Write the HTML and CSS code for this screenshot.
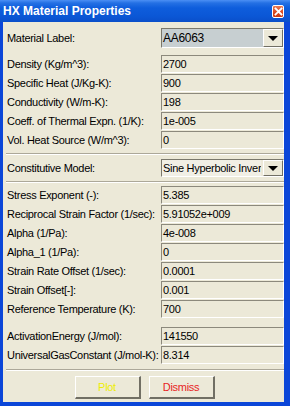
FILE: index.html
```html
<!DOCTYPE html>
<html lang="en">
<head>
    <meta charset="UTF-8">
    <title>HX Material Properties</title>
    <link rel="stylesheet" href="styles.css">
</head>
<body>
    <div class="window">
        <div class="titlebar">
            <span class="title">HX Material Properties</span>
            <span class="close">
                <svg width="9" height="9" viewBox="0 0 9 9">
                    <path d="M1.5 1.5 L7.5 7.5 M7.5 1.5 L1.5 7.5" stroke="#fff" stroke-width="1.8" stroke-linecap="square"/>
                </svg>
            </span>
        </div>
        <div class="frame">
            <div class="row row-top">
                <label>Material Label:</label>
                <div class="combo combo-grey">
                    <span class="combo-text">AA6063</span>
                    <span class="combo-btn"><span class="arrow"></span></span>
                </div>
            </div>

            <div class="group">
                <div class="row"><label>Density (Kg/m^3):</label><div class="field">2700</div></div>
                <div class="row"><label>Specific Heat (J/Kg-K):</label><div class="field">900</div></div>
                <div class="row"><label>Conductivity (W/m-K):</label><div class="field">198</div></div>
                <div class="row"><label>Coeff. of Thermal Expn. (1/K):</label><div class="field">1e-005</div></div>
                <div class="row"><label>Vol. Heat Source (W/m^3):</label><div class="field">0</div></div>
            </div>

            <div class="sep"></div>

            <div class="row row-model">
                <label>Constitutive Model:</label>
                <div class="combo combo-light">
                    <span class="combo-text">Sine Hyperbolic Inver</span>
                    <span class="combo-btn"><span class="arrow"></span></span>
                </div>
            </div>

            <div class="sep sep-model"></div>

            <div class="group">
                <div class="row"><label>Stress Exponent (-):</label><div class="field">5.385</div></div>
                <div class="row"><label>Reciprocal Strain Factor (1/sec):</label><div class="field">5.91052e+009</div></div>
                <div class="row"><label>Alpha (1/Pa):</label><div class="field">4e-008</div></div>
                <div class="row"><label>Alpha_1 (1/Pa):</label><div class="field">0</div></div>
                <div class="row"><label>Strain Rate Offset (1/sec):</label><div class="field">0.0001</div></div>
                <div class="row"><label>Strain Offset[-]:</label><div class="field">0.001</div></div>
                <div class="row"><label>Reference Temperature (K):</label><div class="field">700</div></div>
            </div>

            <div class="group group-gas">
                <div class="row"><label>ActivationEnergy (J/mol):</label><div class="field">141550</div></div>
                <div class="row"><label>UniversalGasConstant (J/mol-K):</label><div class="field">8.314</div></div>
            </div>

            <div class="sep sep-bottom"></div>

            <div class="buttons">
                <button class="btn btn-plot">Plot</button>
                <button class="btn btn-dismiss">Dismiss</button>
            </div>
        </div>
    </div>
</body>
</html>
```

FILE: styles.css
```css
body {
    margin: 0;
    padding: 0;
    font-family: "Liberation Sans", Arial, sans-serif;
    font-size: 11px;
    letter-spacing: -0.3px;
    color: #000;
}
.window {
    width: 290px;
    height: 406px;
    display: flex;
    flex-direction: column;
    overflow: hidden;
}
.titlebar {
    height: 22px;
    flex: none;
    display: flex;
    align-items: center;
    justify-content: space-between;
    padding: 0 6px 0 6px;
    box-sizing: border-box;
    background: linear-gradient(to bottom, #4b8ff4 0, #2470e4 3px, #0e5ddc 8px, #0b57d6 16px, #0a4fca 22px);
}
.title {
    color: #fff;
    font-weight: bold;
    font-size: 12px;
    letter-spacing: 0;
    margin-left: -3px;
    margin-top: -1px;
}
.close {
    width: 12px;
    height: 13px;
    box-sizing: border-box;
    border: 1px solid #fff;
    border-radius: 2px;
    background: linear-gradient(to bottom, #ea7a55, #d9461c 60%, #c83a14);
    display: flex;
    align-items: center;
    justify-content: center;
}
.frame {
    flex: 1;
    background: #ece9d8;
    border-left: 3px solid #0b46d8;
    border-right: 6px solid #0b46d8;
    border-bottom: 4px solid #0b46d8;
    padding: 6px 0 2px 4px;
    display: flex;
    flex-direction: column;
    min-width: 0;
}
.row {
    display: flex;
    align-items: center;
    height: 18px;
    min-width: 0;
}
.row label {
    width: 154px;
    flex: none;
    white-space: nowrap;
}
.row-top {
    height: 20px;
    margin-bottom: 7px;
}
.group {
    display: flex;
    flex-direction: column;
    gap: 1px;
}
.field {
    flex: 1;
    min-width: 0;
    height: 18px;
    box-sizing: border-box;
    border-top: 1px solid #8c897c;
    border-left: 1px solid #8c897c;
    border-bottom: 1px solid #fff;
    border-right: 1px solid #fff;
    padding-left: 1px;
    line-height: 16px;
    white-space: nowrap;
    overflow: hidden;
}
.combo {
    flex: 1;
    min-width: 0;
    height: 100%;
    box-sizing: border-box;
    display: flex;
    border-top: 1px solid #7a786c;
    border-left: 1px solid #7a786c;
    border-bottom: 1px solid #fff;
    border-right: 1px solid #fff;
}
.combo-grey .combo-text {
    background: #c7cfd1;
    font-size: 12px;
}
.combo-light .combo-text {
    background: #f1efe5;
}
.combo-light .combo-btn {
    margin-left: 2px;
}
.combo-text {
    flex: 1;
    min-width: 0;
    padding-left: 1px;
    display: flex;
    align-items: center;
    white-space: nowrap;
    overflow: hidden;
}
.combo-btn {
    width: 20px;
    flex: none;
    box-sizing: border-box;
    background: #ece9d8;
    border-top: 1px solid #fff;
    border-left: 1px solid #fff;
    border-bottom: 1px solid #716f64;
    border-right: 1px solid #716f64;
    display: flex;
    align-items: center;
    justify-content: center;
}
.arrow {
    width: 0;
    height: 0;
    border-left: 5px solid transparent;
    border-right: 5px solid transparent;
    border-top: 5px solid #000;
}
.sep {
    height: 0;
    border-top: 1px solid #aca899;
    border-bottom: 1px solid #fff;
    margin: 4px 0 4px -1px;
}
.row-model {
    height: 18px;
}
.sep-model {
    margin: 4px 0 3px -1px;
}
.group-gas {
    margin-top: 9px;
}
.sep-bottom {
    margin: 5px 0 5px -1px;
}
.buttons {
    display: flex;
    justify-content: center;
    gap: 8px;
    padding-right: 2px;
}
.btn {
    width: 66px;
    height: 23px;
    font-family: "Liberation Sans", Arial, sans-serif;
    font-size: 11px;
    letter-spacing: -0.3px;
    background: #ece9d8;
    border-top: 1px solid #fff;
    border-left: 1px solid #fff;
    border-bottom: 2px solid #716f64;
    border-right: 2px solid #716f64;
    padding: 0;
}
.btn-plot {
    color: #eeee00;
}
.btn-dismiss {
    color: #e82424;
}
```
